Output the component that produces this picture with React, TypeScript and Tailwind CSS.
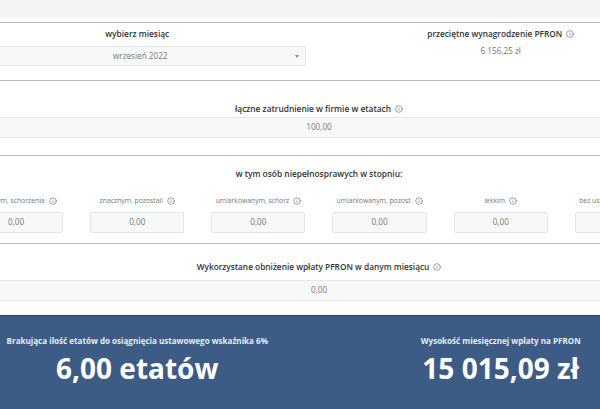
import { Info } from "lucide-react";

const degrees = [
  "znacznym, schorzenia",
  "znacznym, pozostali",
  "umiarkowanym, schorz",
  "umiarkowanym, pozost",
  "lekkim",
  "bez ustalonego stopnia",
];

function Hint() {
  return <Info className="ml-1 inline-block size-[8px] shrink-0 text-[#555]" strokeWidth={1.6} />;
}

function Section({ className, children }: { className: string; children: React.ReactNode }) {
  return <section className={`border-b-[1px] border-[#b9b9b9] ${className}`}>{children}</section>;
}

function ReadOnly({ children }: { children: React.ReactNode }) {
  return (
    <div className="flex h-[21px] items-center justify-center border-y border-[#e6e8e8] bg-[#f7f9f9] text-[8.2px] text-[#777]">
      {children}
    </div>
  );
}

export default function App() {
  return (
    <div className="h-[409px] w-[600px] overflow-hidden bg-white font-['Open_Sans',sans-serif] text-[#333]">
      <div className="h-[18px] bg-[#f4f4f4]" />
      <div className="h-[5px] border-b border-[#b9b9b9]" />
      <div className="-ml-[31px] w-[700px]">
        <Section className="h-[58px]">
          <div className="grid grid-cols-2 gap-[27px] pt-[5px]">
            <div className="flex flex-col items-center">
              <div className="flex h-[12px] items-center text-[8.4px] font-semibold">wybierz miesiąc</div>
              <div className="relative mt-[6px] flex h-[20px] w-full items-center justify-center rounded-[2px] border border-[#e4e6e6] bg-[#f7f9f9] pl-[6px] text-[8.2px] text-[#777]">
                wrzesień 2022
                <span className="absolute right-[6px] top-[8px] border-x-[2.5px] border-t-[3.5px] border-x-transparent border-t-[#888]" />
              </div>
            </div>
            <div className="flex flex-col items-center">
              <div className="flex h-[12px] items-center text-[8.3px] font-semibold">
                przeciętne wynagrodzenie PFRON
                <Hint />
              </div>
              <div className="mt-[5px] text-[8.2px] leading-[12px] text-[#777]">6 156,25 zł</div>
            </div>
          </div>
        </Section>
        <Section className="h-[75px]">
          <div className="flex h-[36px] items-end justify-center pb-[2px]">
            <div className="flex h-[12px] items-center text-[8.4px] font-semibold">
              łączne zatrudnienie w firmie w etatach
              <Hint />
            </div>
          </div>
          <ReadOnly>100,00</ReadOnly>
        </Section>
        <Section className="h-[88px]">
          <div className="flex h-[24px] items-end justify-center">
            <div className="text-[8.4px] font-semibold leading-[12px]">w tym osób niepełnosprawych w stopniu:</div>
          </div>
          <div className="mt-[15px] grid grid-cols-6 gap-[27px]">
            {degrees.map((d) => (
              <div key={d} className="flex flex-col items-center">
                <div className="flex h-[12px] items-center whitespace-nowrap text-[6.8px] text-[#777]">
                  {d}
                  <Hint />
                </div>
                <div className="mt-[5px] flex h-[21px] w-full items-center justify-center rounded-[2px] border border-[#e4e6e6] bg-[#f7f9f9] text-[8.2px] text-[#777]">
                  0,00
                </div>
              </div>
            ))}
          </div>
        </Section>
        <div className="h-[71px]">
          <div className="flex h-[30px] items-end justify-center pb-[1px]">
            <div className="flex h-[12px] items-center text-[8.3px] font-semibold">
              Wykorzystane obniżenie wpłaty PFRON w danym miesiącu
              <Hint />
            </div>
          </div>
          <div className="mt-[6px]">
            <ReadOnly>0,00</ReadOnly>
          </div>
        </div>
      </div>
      <div className="h-[94px] border-t border-[#234a75] bg-[#3d5c85] pt-[19px] text-white">
        <div className="-ml-[31px] grid w-[700px] grid-cols-2 gap-[27px]">
          <div className="flex flex-col items-center">
            <div className="whitespace-nowrap text-[8.05px] font-bold leading-[12px] text-[#e4edf5]">
              Brakująca ilość etatów do osiągnięcia ustawowego wskaźnika 6%
            </div>
            <div className="mt-[4px] whitespace-nowrap text-[28px] font-bold leading-[34px]">6,00 etatów</div>
          </div>
          <div className="flex flex-col items-center">
            <div className="whitespace-nowrap text-[8.05px] font-bold leading-[12px] text-[#e4edf5]">
              Wysokość miesięcznej wpłaty na PFRON
            </div>
            <div className="mt-[4px] whitespace-nowrap text-[28px] font-bold leading-[34px]">15 015,09 zł</div>
          </div>
        </div>
      </div>
    </div>
  );
}
